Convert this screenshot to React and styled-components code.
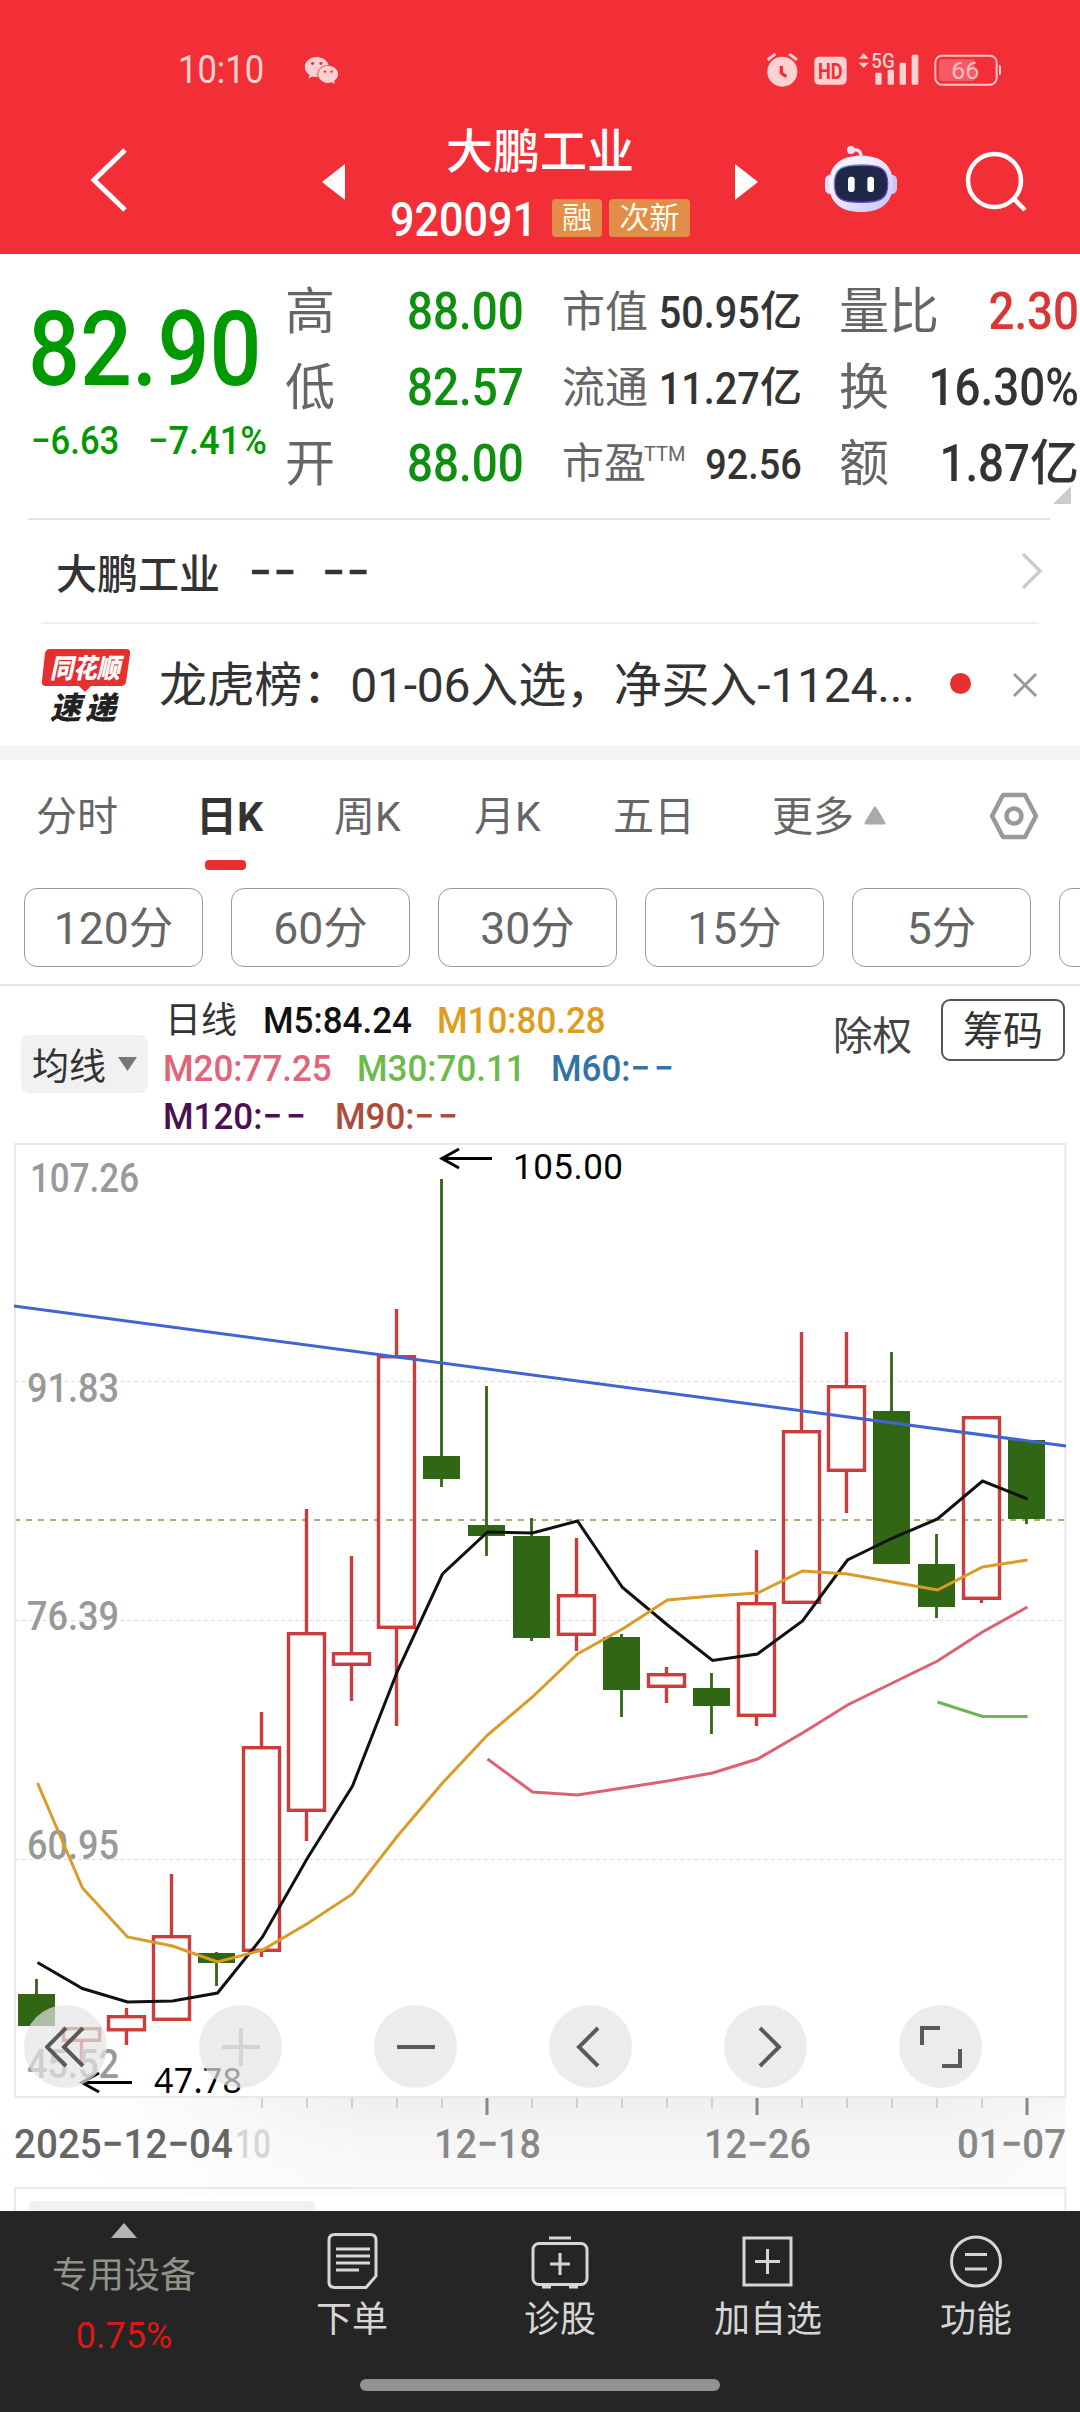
import React from 'react';
import styled, { createGlobalStyle } from 'styled-components';
import { FaWeixin } from 'react-icons/fa';

const GlobalStyle = createGlobalStyle`
  * {
    box-sizing: border-box;
  }
  body {
    margin: 0;
    background-color: #fff;
    font-family: Roboto, 'Noto Sans CJK SC', sans-serif;
  }
  svg {
    display: block;
    flex-shrink: 0;
  }
`;

const Page = styled.div`
  width: 1080px;
  height: 2412px;
  display: flex;
  flex-direction: column;
  overflow: hidden;
  background-color: #fff;
  color: #333;
  white-space: nowrap;
`;

/* narrow quote digits */
const Figure = styled.span`
  display: inline-block;
  flex-shrink: 0;
  font-size: ${(p) => p.$size}px;
  line-height: 1;
  font-weight: ${(p) => p.$weight || 500};
  letter-spacing: ${(p) => p.$spacing || 0}em;
  color: ${(p) => p.$color || 'inherit'};
  transform: scaleX(${(p) => p.$narrow || 0.88});
  transform-origin: ${(p) => p.$origin || 'left'} center;

  .dashes {
    letter-spacing: 0.11em;
  }
`;

/* ---------- header ---------- */

const HeaderBlock = styled.header`
  height: 254px;
  flex-shrink: 0;
  background-color: #f22f37;
  color: #fff;
`;

const StatusBar = styled.div`
  height: 110px;
  padding: 30px 78px 0 178px;
  display: flex;
  align-items: center;
  color: #ffd0d2;

  .time {
    width: 126px;
  }
  .signals {
    margin-left: auto;
  }
`;

const NavRow = styled.div`
  height: 144px;
  padding-left: 90px;
  display: flex;
  align-items: center;

  .back {
    margin-top: -5px;
  }
  .prev {
    margin-left: 194px;
  }
  .robot {
    margin: -6px 0 0 67px;
  }
  .search {
    margin-left: 68px;
  }
`;

const StockTitle = styled.div`
  width: 390px;
  padding-top: 6px;

  .name {
    height: 66px;
    font-size: 47px;
    font-weight: 500;
    line-height: 66px;
    text-align: center;
  }
  .code-line {
    height: 66px;
    margin-left: 45px;
    display: flex;
    align-items: center;
  }
  .code {
    width: 162px;
    flex-shrink: 0;
    padding-top: 2px;
  }
`;

const Badge = styled.span`
  height: 38px;
  width: ${(p) => p.$width}px;
  margin-right: 7px;
  flex-shrink: 0;
  border-radius: 4px;
  background-color: #e38d4b;
  color: #fffbe6;
  font-size: 30px;
  line-height: 37px;
  text-align: center;
`;

const StatusIcons = () => (
  <svg className="signals" width="236" height="36" viewBox="80 34 708 108">
    <g fill="#ffd0d2">
      <circle cx="129" cy="93" r="45" />
      <path d="M82 54 L106 36 L111 43 L88 61Z M176 54 L152 36 L147 43 L170 61Z" />
      <rect x="225" y="48" width="97" height="84" rx="14" />
      <path d="M373 38 L388 54 H358Z M358 66 H388 L373 82Z" />
      <rect x="408" y="96" width="19" height="36" rx="4" />
      <rect x="445" y="87" width="19" height="45" rx="4" />
      <rect x="481" y="66" width="19" height="66" rx="4" />
      <rect x="517" y="42" width="20" height="90" rx="4" />
      <path d="M779 72 q6 0 6 8 v16 q0 8 -6 8Z" />
    </g>
    <path d="M126 76 V97 L141 108" fill="none" stroke="#f22f37" strokeWidth="10" />
    <rect x="588" y="45" width="184" height="87" rx="20" fill="none" stroke="#ffc0c4" strokeWidth="6" />
    <rect x="599" y="56" width="108" height="65" rx="8" fill="#f65a62" />
    <g fontFamily="Roboto">
      <text x="236" y="114" fontSize="68" fontWeight="700" fill="#f22f37" textLength="74" lengthAdjust="spacingAndGlyphs">HD</text>
      <text x="396" y="82" fontSize="62" fontWeight="500" fill="#ffd0d2" textLength="70" lengthAdjust="spacingAndGlyphs">5G</text>
      <text x="636" y="115" fontSize="74" fill="#ffc0c4" textLength="84" lengthAdjust="spacingAndGlyphs">66</text>
    </g>
  </svg>
);

const Robot = () => (
  <svg className="robot" width="72" height="66" viewBox="255 318 216 198">
    <defs>
      <linearGradient id="shell" x1="0" y1="0" x2="1" y2="1">
        <stop offset="0.3" stopColor="#f6f2fd" />
        <stop offset="1" stopColor="#c4c4f4" />
      </linearGradient>
      <linearGradient id="rim" x1="0" y1="0" x2="1" y2="1">
        <stop offset="0" stopColor="#6fb4ee" />
        <stop offset="0.5" stopColor="#7a35c8" />
        <stop offset="1" stopColor="#4f49d8" />
      </linearGradient>
    </defs>
    <path d="M338 331 q24 -6 25 18" fill="none" stroke="#f3e2f0" strokeWidth="10" />
    <circle cx="333" cy="330" r="12" fill="#ece3f6" />
    <rect x="255" y="404" width="40" height="58" rx="16" fill="#dfdcfa" />
    <rect x="431" y="404" width="40" height="58" rx="16" fill="#c9c8f6" />
    <path
      d="M363 347 C425 347 459 376 459 432 C459 486 425 516 363 516 C301 516 267 486 267 432 C267 376 301 347 363 347Z"
      fill="url(#shell)"
    />
    <path
      d="M363 375 C420 375 443 384 443 432 C443 478 420 487 363 487 C306 487 283 478 283 432 C283 384 306 375 363 375Z"
      fill="#1f2947"
      stroke="url(#rim)"
      strokeWidth="4"
    />
    <rect x="324" y="410" width="20" height="46" rx="9" fill="#fff" />
    <rect x="382" y="410" width="20" height="46" rx="9" fill="#fff" />
  </svg>
);

const Header = () => (
  <HeaderBlock>
    <StatusBar>
      <div className="time">
        <Figure $size={38} $weight={400} $narrow={0.91}>10:10</Figure>
      </div>
      <FaWeixin size={35} />
      <StatusIcons />
    </StatusBar>
    <NavRow>
      <svg className="back" width="38" height="64" viewBox="0 0 38 64">
        <path d="M35 2 L4 32 L35 62" fill="none" stroke="#fff" strokeWidth="5" />
      </svg>
      <svg className="prev" width="23" height="36" viewBox="0 0 23 36">
        <path d="M23 0 V36 L0 18Z" fill="#fff" />
      </svg>
      <StockTitle>
        <div className="name">大鹏工业</div>
        <div className="code-line">
          <div className="code">
            <Figure $size={49}>920091</Figure>
          </div>
          <Badge $width={50}>融</Badge>
          <Badge $width={81}>次新</Badge>
        </div>
      </StockTitle>
      <svg width="23" height="36" viewBox="0 0 23 36">
        <path d="M0 0 V36 L23 18Z" fill="#fff" />
      </svg>
      <Robot />
      <svg className="search" width="62" height="62" viewBox="0 0 62 62">
        <circle cx="29.5" cy="29.5" r="26.5" fill="none" stroke="#fff" strokeWidth="4.5" />
        <path d="M48 47 L60 59" stroke="#fff" strokeWidth="4.5" />
      </svg>
    </NavRow>
  </HeaderBlock>
);

/* ---------- quote ---------- */

const QuoteBlock = styled.section`
  position: relative;
  height: 264px;
  padding: 20px 1px 0 28px;
  flex-shrink: 0;
  display: flex;
`;

const PriceBox = styled.div`
  width: 257px;
  padding-top: 24px;
  color: #009900;

  .price {
    height: 124px;
  }
  .change {
    display: flex;
    padding-left: 3px;
  }
  .change > div {
    width: 117px;
  }
`;

const QuoteColumn = styled.div`
  width: ${(p) => p.$width}px;
  margin-right: ${(p) => p.$gap || 0}px;
`;

const QuoteCell = styled.div`
  height: 76px;
  display: flex;
  align-items: center;
  justify-content: space-between;

  .label {
    display: flex;
    font-size: ${(p) => p.$label}px;
    line-height: 76px;
    color: #666;
  }
  .label sup {
    margin-left: -2px;
    font-size: 20px;
    line-height: 57px;
    vertical-align: top;
  }
  .value {
    display: flex;
    align-items: center;
    justify-content: flex-end;
    width: 0;
    color: ${(p) => p.$color || '#333'};
  }
  .unit {
    font-size: ${(p) => p.$label - 1}px;
    font-weight: 500;
    line-height: 76px;
  }
`;

const Corner = styled.i`
  position: absolute;
  right: 9px;
  bottom: 14px;
  border-bottom: 18px solid #ccc;
  border-left: 18px solid transparent;
`;

const COLUMNS = [
  {
    width: 239,
    gap: 38,
    label: 50,
    size: 52,
    cells: [
      { label: '高', value: '88.00', color: '#0f8f0f' },
      { label: '低', value: '82.57', color: '#0f8f0f' },
      { label: '开', value: '88.00', color: '#0f8f0f' },
    ],
  },
  {
    width: 240,
    gap: 37,
    label: 43,
    size: 45,
    cells: [
      { label: '市值', value: '50.95', unit: '亿' },
      { label: '流通', value: '11.27', unit: '亿' },
      { label: '市盈', sup: 'TTM', value: '92.56', size: 43, labelSize: 42 },
    ],
  },
  {
    width: 240,
    label: 50,
    size: 52,
    cells: [
      { label: '量比', value: '2.30', color: '#d93636' },
      { label: '换', value: '16.30%' },
      { label: '额', value: '1.87', unit: '亿' },
    ],
  },
];

const Quote = () => (
  <QuoteBlock>
    <PriceBox>
      <div className="price">
        <Figure $size={104}>82.90</Figure>
      </div>
      <div className="change">
        <div>
          <Figure $size={39} $narrow={0.89}>−6.63</Figure>
        </div>
        <div>
          <Figure $size={39} $narrow={0.93}>−7.41%</Figure>
        </div>
      </div>
    </PriceBox>
    {COLUMNS.map((col, i) => (
      <QuoteColumn key={i} $width={col.width} $gap={col.gap}>
        {col.cells.map((cell) => (
          <QuoteCell key={cell.label} $label={cell.labelSize || col.label} $color={cell.color}>
            <div className="label">
              {cell.label}
              {cell.sup && <sup>{cell.sup}</sup>}
            </div>
            <div className="value">
              <Figure $size={cell.size || col.size} $origin="right">
                {cell.value}
              </Figure>
              {cell.unit && <span className="unit">{cell.unit}</span>}
            </div>
          </QuoteCell>
        ))}
      </QuoteColumn>
    ))}
    <Corner />
  </QuoteBlock>
);

/* ---------- info rows ---------- */

const RelatedRow = styled.div`
  height: 104px;
  margin: 0 30px 0 28px;
  padding: 0 7px 0 28px;
  flex-shrink: 0;
  display: flex;
  align-items: center;
  border-top: 2px solid #e2e2e2;
  font-size: 41px;
  font-weight: 500;

  .dash {
    margin: 4px 0 0 29px;
  }
  .dash + .dash {
    margin-left: 24px;
  }
  svg {
    margin-left: auto;
  }
`;

const NewsRow = styled.div`
  height: 124px;
  margin: 0 41px;
  flex-shrink: 0;
  display: flex;
  align-items: center;
  border-top: 2px solid #eee;

  .text {
    width: 766px;
    margin: -8px 0 0 28px;
    padding-right: 4px;
    flex-shrink: 0;
    font-size: 48px;
    letter-spacing: -0.2px;
  }
  .dot {
    width: 21px;
    height: 21px;
    margin: -3px 41px 0 25px;
    flex-shrink: 0;
    border-radius: 50%;
    background-color: #e93030;
  }
`;

const Divider = styled.div`
  height: 14px;
  flex-shrink: 0;
  background-color: #f4f4f4;
`;

const NewsLogo = () => (
  <svg width="90" height="74" viewBox="0 0 90 74">
    <path d="M9 1 H85 Q90 1 89 6 L85 34 Q84 38 80 38 H50 L44 44 L38 38 H5 Q0 38 1 33 L4 5 Q5 1 9 1Z" fill="#e52f31" />
    <g fontFamily="Noto Sans CJK SC" fontWeight="900" fontStyle="italic">
      <text x="9" y="30" fontSize="27" fill="#fff" textLength="70" lengthAdjust="spacingAndGlyphs">同花顺</text>
      <text x="9" y="71" fontSize="31" fill="#222" textLength="66">速递</text>
    </g>
  </svg>
);

const InfoRows = () => (
  <>
    <RelatedRow>
      大鹏工业
      <Figure className="dash" $size={40} $weight={700} $narrow={1} $spacing={0.06}>−−</Figure>
      <Figure className="dash" $size={40} $weight={700} $narrow={1} $spacing={0.06}>−−</Figure>
      <svg width="22" height="38" viewBox="0 0 22 38">
        <path d="M2 2 L19 19 L2 36" fill="none" stroke="#ccc" strokeWidth="3.5" />
      </svg>
    </RelatedRow>
    <NewsRow>
      <NewsLogo />
      <div className="text">龙虎榜：01-06入选，净买入-1124...</div>
      <div className="dot" />
      <svg width="26" height="26" viewBox="0 0 26 26">
        <path d="M2 2 L24 24 M24 2 L2 24" stroke="#999" strokeWidth="3" />
      </svg>
    </NewsRow>
    <Divider />
  </>
);

/* ---------- period tabs ---------- */

const TabBar = styled.nav`
  height: 112px;
  padding-left: 36px;
  flex-shrink: 0;
  display: flex;

  svg.more {
    margin: 46px 0 0 -50px;
  }
  svg.setting {
    margin: 32px 0 0 103px;
  }
`;

const Tab = styled.div`
  width: ${(p) => p.$width}px;
  font-size: 41px;
  line-height: 114px;
  font-weight: ${(p) => (p.$active ? 700 : 400)};
  color: ${(p) => (p.$active ? '#333' : '#666')};

  &::after {
    content: '';
    display: ${(p) => (p.$active ? 'block' : 'none')};
    width: 41px;
    height: 10px;
    margin: -14px 0 0 9px;
    border-radius: 4px;
    background-color: #e93030;
  }
`;

const ChipRow = styled.div`
  height: 114px;
  padding: 16px 0 0 24px;
  flex-shrink: 0;
  display: flex;
  gap: 28px;
  overflow: hidden;
  border-bottom: 2px solid #e6e6e6;
`;

const Chip = styled.div`
  width: 179px;
  height: 79px;
  flex-shrink: 0;
  border: 1.5px solid #999;
  border-radius: 13px;
  font-size: 44.5px;
  line-height: 80px;
  text-align: center;
  color: #666;
`;

const TABS = [
  { name: '分时', width: 160 },
  { name: '日K', width: 138, active: true },
  { name: '周K', width: 140 },
  { name: '月K', width: 139 },
  { name: '五日', width: 159 },
  { name: '更多', width: 142 },
];

const Periods = () => (
  <>
    <TabBar>
      {TABS.map((tab) => (
        <Tab key={tab.name} $width={tab.width} $active={tab.active}>
          {tab.name}
        </Tab>
      ))}
      <svg className="more" width="22" height="19" viewBox="0 0 22 19">
        <path d="M11 2 L20 17 H2Z" fill="#aaa" stroke="#aaa" strokeWidth="3" strokeLinejoin="round" />
      </svg>
      <svg className="setting" width="50" height="48" viewBox="0 0 50 48">
        <g fill="none" stroke="#999" strokeWidth="4.5" strokeLinejoin="round">
          <path d="M14 3 H36 L47 24 L36 45 H14 L3 24Z" />
          <circle cx="25" cy="24" r="7.5" />
        </g>
      </svg>
    </TabBar>
    <ChipRow>
      {['120分', '60分', '30分', '15分', '5分', ''].map((name) => (
        <Chip key={name}>{name}</Chip>
      ))}
    </ChipRow>
  </>
);

/* ---------- moving averages ---------- */

const AverageBlock = styled.div`
  height: 157px;
  padding: 9px 14px 0 21px;
  flex-shrink: 0;
  display: flex;
`;

const AverageButton = styled.div`
  width: 127px;
  height: 58px;
  margin-top: 40px;
  padding-left: 11px;
  flex-shrink: 0;
  display: flex;
  align-items: center;
  gap: 12px;
  border-radius: 8px;
  background-color: #f1f1f1;
  font-size: 37px;
`;

const AverageList = styled.div`
  width: 685px;
  padding: 2px 0 0 15px;
  flex-shrink: 0;

  .line {
    height: 48px;
    display: flex;
    align-items: center;
    font-size: 36px;
    line-height: 44px;
  }
`;

const Average = styled.div`
  width: ${(p) => p.$width}px;
  padding-left: ${(p) => (p.$plain ? 2 : 0)}px;
  color: ${(p) => p.$color};
`;

const RightButtons = styled.div`
  display: flex;

  .adjust {
    width: 93px;
    font-size: 39.5px;
    line-height: 83px;
    color: #444;
  }
  .chips {
    width: 124px;
    height: 62px;
    margin: 4px 0 0 15px;
    flex-shrink: 0;
    border: 2px solid #555;
    border-radius: 9px;
    font-size: 40px;
    line-height: 61px;
    text-align: center;
  }
`;

const AVERAGES = [
  [
    { text: '日线', width: 100, color: '#333', plain: true },
    { text: 'M5:84.24', width: 174, color: '#111' },
    { text: 'M10:80.28', width: 180, color: '#e09c1c' },
  ],
  [
    { text: 'M20:77.25', width: 194, color: '#e2637a' },
    { text: 'M30:70.11', width: 194, color: '#6bbb4c' },
    { text: 'M60:', empty: true, width: 140, color: '#3173a5' },
  ],
  [
    { text: 'M120:', empty: true, width: 172, color: '#4c1050' },
    { text: 'M90:', empty: true, width: 140, color: '#ad4c39' },
  ],
];

const Averages = () => (
  <AverageBlock>
    <AverageButton>
      均线
      <svg width="19" height="14" viewBox="0 0 19 14">
        <path d="M0 0 H19 L9.5 14Z" fill="#777" />
      </svg>
    </AverageButton>
    <AverageList>
      {AVERAGES.map((line, i) => (
        <div className="line" key={i}>
          {line.map((item) => (
            <Average key={item.text} $width={item.width} $color={item.color} $plain={item.plain}>
              {item.plain ? (
                item.text
              ) : (
                <Figure $size={37} $narrow={0.945}>
                  {item.text}
                  {item.empty && <span className="dashes">−−</span>}
                </Figure>
              )}
            </Average>
          ))}
        </div>
      ))}
    </AverageList>
    <RightButtons>
      <div className="adjust">除权</div>
      <div className="chips">筹码</div>
    </RightButtons>
  </AverageBlock>
);

/* ---------- chart ---------- */

const ChartBlock = styled.section`
  position: relative;
  height: 1068px;
  flex-shrink: 0;
`;

const ToolBar = styled.div`
  position: absolute;
  left: 24px;
  top: 862px;
  display: flex;
  gap: 92px;
`;

const ToolButton = styled.button`
  width: 83px;
  height: 83px;
  padding: 0;
  display: flex;
  align-items: center;
  justify-content: center;
  border: 0;
  border-radius: 50%;
  background-color: rgba(228, 228, 228, 0.7);
`;

const STEP = 45;
const FIRST_X = 36.5;
const UP = '#cb3d3d';
const DOWN = '#306614';

// direction, high, body top, body bottom, low
const CANDLES = [
  ['down', 1979, 1994, 2026, 2026],
  ['up', 2027, 2027, 2042, 2061],
  ['up', 2008, 2015, 2031.5, 2045],
  ['up', 1874, 1935, 2021, 2021],
  ['down', 1952, 1953, 1963, 1986],
  ['up', 1712, 1746, 1952, 1957],
  ['up', 1509, 1632, 1812, 1841],
  ['up', 1556, 1652, 1666, 1701],
  ['up', 1309, 1355, 1629, 1726],
  ['down', 1179, 1456, 1479, 1487],
  ['down', 1386, 1525, 1536, 1556],
  ['down', 1518, 1536, 1638, 1641],
  ['up', 1538, 1594, 1636, 1651],
  ['down', 1634, 1637, 1690, 1717],
  ['up', 1667, 1673, 1688, 1703],
  ['down', 1673, 1688, 1706, 1734],
  ['up', 1550, 1602, 1717, 1726],
  ['up', 1332, 1430, 1604, 1604],
  ['up', 1332, 1385, 1472, 1513],
  ['down', 1352, 1411, 1564, 1564],
  ['down', 1534, 1564, 1607, 1618],
  ['up', 1416, 1416, 1600, 1603],
  ['down', 1440, 1440, 1519, 1524],
];

const LINES = [
  {
    color: '#111',
    start: 0,
    ys: [1962.5, 1988.5, 2002, 2001, 1993, 1937, 1858, 1786, 1671, 1574, 1532, 1533, 1521, 1587.5, 1625, 1660.5, 1654, 1621, 1560, 1538, 1519, 1481, 1499],
  },
  {
    color: '#d99c26',
    start: 0,
    ys: [1783, 1888, 1937, 1946, 1962, 1950, 1923.5, 1894, 1836, 1783, 1735, 1697, 1654, 1629, 1600, 1596, 1593, 1571, 1574, 1582, 1590, 1567, 1560],
  },
  {
    color: '#dc6273',
    start: 10,
    ys: [1759, 1792, 1795, 1788, 1781, 1773, 1759, 1733, 1705, 1683, 1661, 1632, 1607],
  },
  { color: '#6fb554', start: 20, ys: [1702, 1716.5, 1716.5] },
];

const AXIS_LABELS = [
  { text: '107.26', x: 30, y: 1192, width: 109 },
  { text: '91.83', x: 27, y: 1402, width: 92 },
  { text: '76.39', x: 27, y: 1630, width: 92 },
  { text: '60.95', x: 27, y: 1859, width: 92 },
  { text: '45.52', x: 27, y: 2078, width: 92 },
];

const TOOLS = [
  { name: 'first', d: 'M21 2 L2 21 L21 40 M38 2 L19 21 L38 40' },
  { name: 'zoom in', d: 'M2 21 H40 M21 2 V40', color: '#d3d3d3' },
  { name: 'zoom out', d: 'M2 21 H40' },
  { name: 'previous', d: 'M28 2 L9 21 L28 40' },
  { name: 'next', d: 'M15 2 L34 21 L15 40' },
  { name: 'expand', d: 'M2 19 V2 H20 M40 23 V40 H22' },
];

const centerOf = (i) => FIRST_X + i * STEP;

const Candle = ({ index, data }) => {
  const [dir, high, top, bottom, low] = data;
  const x = centerOf(index);
  if (dir === 'down') {
    return (
      <g fill={DOWN}>
        <rect x={x - 1.4} y={high} width="2.8" height={low - high} />
        <rect x={x - 18.5} y={top} width="37" height={bottom - top} />
      </g>
    );
  }
  return (
    <g fill="none" stroke={UP} strokeWidth="3.4">
      <path d={`M${x} ${high} V${top + 1} M${x} ${bottom - 1} V${low}`} />
      <rect x={x - 18} y={top + 1.7} width="36" height={bottom - top - 3.4} />
    </g>
  );
};

const Chart = () => (
  <ChartBlock>
    <svg width="1080" height="1068" viewBox="0 1143 1080 1068">
      <defs>
        <linearGradient id="axisShade" x1="0" y1="0" x2="0" y2="1">
          <stop offset="0" stopColor="#efefef" />
          <stop offset="0.45" stopColor="#f6f6f6" />
          <stop offset="1" stopColor="#fafafa" />
        </linearGradient>
        <linearGradient id="axisFade" x1="0" y1="0" x2="1" y2="0">
          <stop offset="0" stopColor="#fff" />
          <stop offset="0.1" stopColor="#fff" stopOpacity="0.9" />
          <stop offset="0.34" stopColor="#fff" stopOpacity="0" />
          <stop offset="0.88" stopColor="#fff" stopOpacity="0" />
          <stop offset="1" stopColor="#fff" stopOpacity="0.5" />
        </linearGradient>
      </defs>
      <rect x="15" y="2098" width="1051" height="97" fill="url(#axisShade)" />
      <rect x="15" y="2098" width="1051" height="97" fill="url(#axisFade)" />

      <g stroke="#dedede" strokeWidth="1.2" strokeDasharray="4 3">
        <path d="M15 1381.5 H1065" />
        <path d="M15 1620.5 H1065" />
        <path d="M15 1859.5 H1065" />
      </g>
      <path d="M14 1520 H1066" stroke="#b9a878" strokeWidth="2" strokeDasharray="6 6" />
      <g fill="none" stroke="#e9e9e9" strokeWidth="2">
        <rect x="15" y="1144" width="1050.5" height="953" />
        <path d="M15 2211 V2188 H1065.5 V2211" />
      </g>
      <path d="M28 2211 V2207 Q28 2201 34 2201 H310 Q316 2201 316 2207 V2211Z" fill="#f1f1f1" />

      {CANDLES.map((data, i) => (
        <Candle key={i} index={i} data={data} />
      ))}

      <g fill="#999" fontFamily="Roboto" fontSize="40" fontWeight="500">
        {AXIS_LABELS.map((l) => (
          <text key={l.text} x={l.x} y={l.y} textLength={l.width} lengthAdjust="spacingAndGlyphs">
            {l.text}
          </text>
        ))}
      </g>

      {LINES.map((line) => (
        <polyline
          key={line.color}
          points={line.ys.map((y, i) => `${centerOf(line.start + i) + 1},${y}`).join(' ')}
          fill="none"
          stroke={line.color}
          strokeWidth="3"
        />
      ))}
      <path d="M14 1306 L1066 1446" stroke="#3f66d0" strokeWidth="3" />

      <g fill="none" stroke="#000" strokeWidth="3">
        <path d="M492 1158.5 H443 M459 1149 L442 1158.5 L459 1168" />
        <path d="M132 2082.5 H83 M99 2073 L82 2082.5 L99 2092" />
      </g>
      <g fill="#000" fontFamily="Roboto" fontSize="35">
        <text x="513" y="1179" textLength="110">105.00</text>
        <text x="154" y="2093" fontFamily="Noto Sans" fontSize="34" textLength="88">47.78</text>
      </g>

      {CANDLES.map((_, i) => {
        if (i < 5) return null;
        const major = [10, 16, 22].includes(i);
        return (
          <path
            key={i}
            d={`M${centerOf(i) + 0.5} 2098 v${major ? 17 : 10}`}
            stroke={major ? '#888' : '#c8c8c8'}
            strokeWidth={major ? 3 : 1.6}
          />
        );
      })}

      <g fontFamily="Roboto" fontSize="41" fontWeight="500" fill="#888">
        <text x="235" y="2158" fill="#d6d6d6" textLength="36" lengthAdjust="spacingAndGlyphs">10</text>
        <text x="14" y="2158" fill="#666" textLength="219" lengthAdjust="spacingAndGlyphs">2025−12−04</text>
        <text x="434" y="2158" textLength="107" lengthAdjust="spacingAndGlyphs">12−18</text>
        <text x="704" y="2158" textLength="107" lengthAdjust="spacingAndGlyphs">12−26</text>
        <text x="957" y="2158" textLength="109" lengthAdjust="spacingAndGlyphs">01−07</text>
      </g>
    </svg>

    <ToolBar>
      {TOOLS.map((tool) => (
        <ToolButton key={tool.name} aria-label={tool.name}>
          <svg width="42" height="42" viewBox="0 0 42 42">
            <path d={tool.d} fill="none" stroke={tool.color || '#5a5a5a'} strokeWidth="4" />
          </svg>
        </ToolButton>
      ))}
    </ToolBar>
  </ChartBlock>
);

/* ---------- bottom bar ---------- */

const BottomBlock = styled.footer`
  height: 201px;
  flex-shrink: 0;
  background-color: #252525;
`;

const BottomRow = styled.div`
  height: 168px;
  display: grid;
  grid-template-columns: 248px repeat(4, 208px);
`;

const Sector = styled.div`
  padding-top: 12px;
  display: flex;
  flex-direction: column;
  align-items: center;
  font-size: 36px;
  line-height: 60px;
  color: #8f9489;

  svg {
    margin-bottom: 7px;
  }
  .percent {
    color: #dd1717;
  }
`;

const Action = styled.div`
  padding-top: 21px;
  display: flex;
  flex-direction: column;
  align-items: center;
  font-size: 36px;
  line-height: 60px;
  color: #d6d6d6;
`;

const HomeIndicator = styled.div`
  width: 360px;
  height: 12px;
  margin: 0 auto;
  border-radius: 6px;
  background-color: #929292;
`;

const ACTIONS = [
  {
    name: '下单',
    icon: (
      <>
        <path d="M12 2.5 H47 Q53 2.5 53 8 V44 L43 55.5 H12 Q6 55.5 6 50 V8 Q6 2.5 12 2.5Z" />
        <path d="M13 17 H47 M13 24 H47 M13 31 H47 M13 38 H36" />
      </>
    ),
  },
  {
    name: '诊股',
    icon: (
      <>
        <rect x="2" y="11.5" width="54" height="41" rx="6" />
        <path d="M18 6 H40 M29 21 V43 M19 32 H39 M11 55 H20 M38 55 H47" />
      </>
    ),
  },
  {
    name: '加自选',
    icon: (
      <>
        <rect x="5" y="6" width="47" height="47" />
        <path d="M28.5 17 V42 M16 29.5 H41" />
      </>
    ),
  },
  {
    name: '功能',
    icon: (
      <>
        <circle cx="29" cy="29.5" r="24.5" />
        <path d="M18 22.5 H40 M18 37 H40" />
      </>
    ),
  },
];

const BottomBar = () => (
  <BottomBlock>
    <BottomRow>
      <Sector>
        <svg width="26" height="16" viewBox="0 0 26 16">
          <path d="M13 0 L26 15 H0Z" fill="#b5b5b5" />
        </svg>
        <div>专用设备</div>
        <div className="percent">0.75%</div>
      </Sector>
      {ACTIONS.map((action) => (
        <Action key={action.name}>
          <svg width="58" height="58" viewBox="0 0 58 58">
            <g fill="none" stroke="#d6d6d6" strokeWidth="3">
              {action.icon}
            </g>
          </svg>
          <div>{action.name}</div>
        </Action>
      ))}
    </BottomRow>
    <HomeIndicator />
  </BottomBlock>
);

const App = () => (
  <>
    <GlobalStyle />
    <Page>
      <Header />
      <Quote />
      <InfoRows />
      <Periods />
      <Averages />
      <Chart />
      <BottomBar />
    </Page>
  </>
);

export default App;
